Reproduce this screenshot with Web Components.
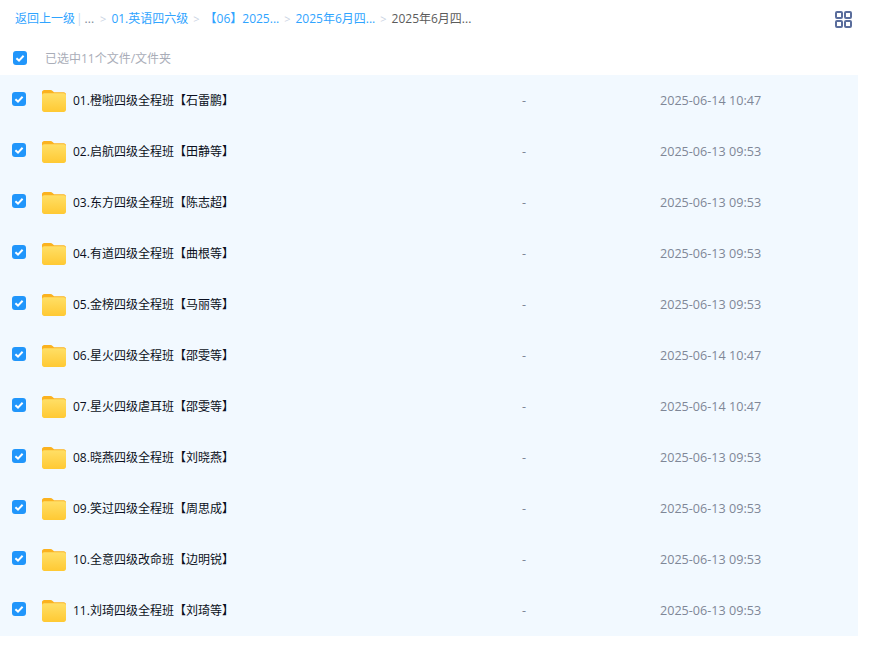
<!DOCTYPE html>
<html lang="zh"><head><meta charset="utf-8"><title>文件</title>
<style>
html,body{margin:0;padding:0;background:#fff}
body{font-family:"Open Sans","Noto Sans CJK SC",sans-serif;width:869px;height:647px;overflow:hidden}
</style></head><body>
<x-app>
<x-breadcrumb>
  <x-crumb kind="link">返回上一级</x-crumb><x-crumb kind="sep1">|</x-crumb><x-crumb kind="dots">...</x-crumb>
  <x-crumb kind="arrow">&gt;</x-crumb><x-crumb kind="link">01.英语四六级</x-crumb>
  <x-crumb kind="arrow">&gt;</x-crumb><x-crumb kind="link">【06】2025...</x-crumb>
  <x-crumb kind="arrow">&gt;</x-crumb><x-crumb kind="link">2025年6月四...</x-crumb>
  <x-crumb kind="arrow">&gt;</x-crumb><x-crumb kind="current">2025年6月四...</x-crumb>
</x-breadcrumb>
<x-select-bar>已选中11个文件/文件夹</x-select-bar>
<x-file-list>
<x-file-row date="2025-06-14 10:47">01.橙啦四级全程班【石雷鹏】</x-file-row>
<x-file-row date="2025-06-13 09:53">02.启航四级全程班【田静等】</x-file-row>
<x-file-row date="2025-06-13 09:53">03.东方四级全程班【陈志超】</x-file-row>
<x-file-row date="2025-06-13 09:53">04.有道四级全程班【曲根等】</x-file-row>
<x-file-row date="2025-06-13 09:53">05.金榜四级全程班【马丽等】</x-file-row>
<x-file-row date="2025-06-14 10:47">06.星火四级全程班【邵雯等】</x-file-row>
<x-file-row date="2025-06-14 10:47">07.星火四级虐耳班【邵雯等】</x-file-row>
<x-file-row date="2025-06-13 09:53">08.晓燕四级全程班【刘晓燕】</x-file-row>
<x-file-row date="2025-06-13 09:53">09.笑过四级全程班【周思成】</x-file-row>
<x-file-row date="2025-06-13 09:53">10.全意四级改命班【边明锐】</x-file-row>
<x-file-row date="2025-06-13 09:53">11.刘琦四级全程班【刘琦等】</x-file-row>
</x-file-list>
</x-app>
<script>
function def(name, html, init){
  customElements.define(name, class extends HTMLElement{
    constructor(){super();this.attachShadow({mode:'open'}).innerHTML=html;}
    connectedCallback(){ if(init) init(this); }
  });
}
def('x-app',`<style>:host{display:block;width:858px}</style><slot></slot>`);
def('x-check',`<style>:host{display:block;width:14px;height:14px}svg{display:block}</style>
<svg width="14" height="14" viewBox="0 0 14 14"><rect width="14" height="14" rx="3" fill="#2196fb"/><path d="M3.4 7.2 6 9.6 10.6 4.8" fill="none" stroke="#fff" stroke-width="2"/></svg>`);
def('x-folder',`<style>:host{display:block;width:24px;height:22px}svg{display:block}</style>
<svg width="24" height="22" viewBox="0 0 24 22"><defs><linearGradient id="f" x1="0" y1="0" x2="0" y2="1"><stop offset="0" stop-color="#ffdf66"/><stop offset="1" stop-color="#ffc933"/></linearGradient></defs>
<path d="M0 2.2C0 1 1 0 2.2 0H8.4C9.4 0 10 .4 10.6 1L12 2.3H21.8C23 2.3 24 3.3 24 4.5V8H0Z" fill="#fbb21f"/>
<path d="M0 5.2C0 4 1 3.2 2.2 3.2H21.8C23 3.2 24 4 24 5.2V19.8C24 21 23 22 21.8 22H2.2C1 22 0 21 0 19.8Z" fill="url(#f)"/></svg>`);
def('x-view-toggle',`<style>:host{display:block;width:17px;height:17px}svg{display:block}</style>
<svg width="17" height="17" viewBox="0 0 17 17" fill="none" stroke="#5a6d9c" stroke-width="2"><rect x="1" y="1" width="6" height="6" rx="1"/><rect x="10" y="1" width="6" height="6" rx="1"/><rect x="1" y="10" width="6" height="6" rx="1"/><rect x="10" y="10" width="6" height="6" rx="1"/></svg>`);
def('x-breadcrumb',`<style>:host{display:flex;align-items:center;height:38px;padding:0 6px 0 15px;font-size:12px;box-sizing:border-box}
.t{display:flex;align-items:center;flex:1;white-space:nowrap}
</style><div class="t"><slot></slot></div><div id="e"></div>`,
 el=>{const e=el.shadowRoot.getElementById('e'); if(!e.firstChild) e.appendChild(document.createElement('x-view-toggle'));});
const cs={link:'color:#2fa4ff',sep1:'color:#c9dcf0;margin:0 2px 0 1px',dots:'color:#7f8a99;margin-right:1px',arrow:'color:#c9d3e3;margin:0 5px 0 5px;font-size:11px',current:'color:#5b5b5b'};
customElements.define('x-crumb',class extends HTMLElement{
  constructor(){super();this.attachShadow({mode:'open'}).innerHTML=`<style>:host{display:block;line-height:18px}</style><slot></slot>`;}
  connectedCallback(){ this.style.cssText=cs[this.getAttribute('kind')]||''; }
});
def('x-select-bar',`<style>:host{display:flex;align-items:center;height:37px;padding-left:13px;font-size:12px;color:#a9adb8}
x-check{margin-top:2px}
span{margin-left:18px;margin-top:3px}</style><x-check></x-check><span><slot></slot></span>`);
def('x-file-list',`<style>:host{display:block;background:#f2f9ff}</style><slot></slot>`);
customElements.define('x-file-row',class extends HTMLElement{
  constructor(){super();this.attachShadow({mode:'open'}).innerHTML=`<style>
  :host{display:grid;grid-template-columns:522px 138px 1fr;align-items:center;height:51px}
  .n{display:flex;align-items:center;padding-left:12px;font-size:12px;color:#0a0f20}
  x-folder{margin-left:16px;margin-top:1px;margin-right:7px}
  x-check{margin-top:-3px}
  span{margin-top:-2px}
  .d,.t{font-size:12.6px;color:#7f8797;margin-top:-1px}
  </style><div class="n"><x-check></x-check><x-folder></x-folder><span><slot></slot></span></div><div class="d">-</div><div class="t"></div>`;}
  connectedCallback(){this.shadowRoot.querySelector('.t').textContent=this.getAttribute('date');}
});
</script>
</body></html>
